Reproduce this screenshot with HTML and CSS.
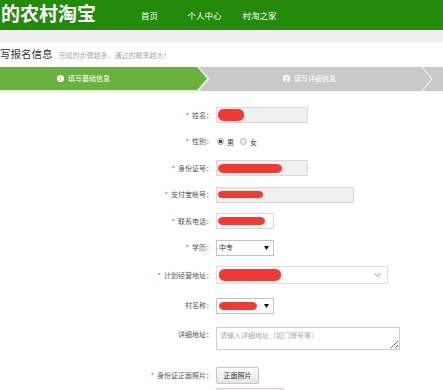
FILE: index.html
```html
<!DOCTYPE html>
<html lang="zh-CN">
<head>
<meta charset="utf-8">
<title>填写报名信息</title>
<link rel="stylesheet" href="styles.css">
</head>
<body>
<header class="topbar">
  <div class="logo">的农村淘宝</div>
  <nav class="nav">
    <a href="#">首页</a>
    <a href="#">个人中心</a>
    <a href="#">村淘之家</a>
  </nav>
</header>
<div class="strip"></div>
<main>
  <div class="page-title">
    <h1>写报名信息</h1>
    <span class="hint">完成的步骤越多，通过的概率越大！</span>
  </div>
  <div class="steps">
    <div class="step step-first">
      <span class="step-label"><span class="num num-active">1</span>填写基础信息</span>
    </div>
    <div class="step step-second">
      <span class="step-label"><span class="num">2</span>填写详细信息</span>
      <svg class="chev" width="12" height="24" viewBox="0 0 12 24"><path d="M1 0 L11 12 L1 24" fill="none" stroke="#fff" stroke-width="1"/></svg>
    </div>
  </div>

  <form class="form">
    <div class="row">
      <span class="label"><span class="req">*</span>姓名：</span>
      <div class="input w-md"><span class="redact r-name"></span></div>
    </div>
    <div class="row">
      <span class="label"><span class="req">*</span>性别：</span>
      <div class="radios">
        <span class="radio radio-on"></span><span class="opt">男</span>
        <span class="radio"></span><span class="opt">女</span>
      </div>
    </div>
    <div class="row">
      <span class="label"><span class="req">*</span>身份证号：</span>
      <div class="input w-md"><span class="redact r-id"></span></div>
    </div>
    <div class="row">
      <span class="label"><span class="req">*</span>支付宝帐号：</span>
      <div class="input w-lg"><span class="redact r-pay"></span></div>
    </div>
    <div class="row">
      <span class="label"><span class="req">*</span>联系电话：</span>
      <div class="input input-white w-sm"><span class="redact r-tel"></span></div>
    </div>
    <div class="row">
      <span class="label"><span class="req">*</span>学历：</span>
      <div class="select w-sm"><span class="val">中专</span><svg width="5" height="4" viewBox="0 0 5 4"><path d="M0 0 H5 L2.5 4 Z" fill="#111"/></svg></div>
    </div>
    <div class="row">
      <span class="label"><span class="req">*</span>计划经营地址：</span>
      <div class="select select-wide w-xl"><span class="redact r-addr"></span><svg width="7" height="4" viewBox="0 0 7 4"><path d="M0.5 0.5 L3.5 3.3 L6.5 0.5" fill="none" stroke="#888" stroke-width="0.9"/></svg></div>
    </div>
    <div class="row row-gap3">
      <span class="label">村名称：</span>
      <div class="select w-sm"><span class="redact r-village"></span><svg width="5" height="4" viewBox="0 0 5 4"><path d="M0 0 H5 L2.5 4 Z" fill="#111"/></svg></div>
    </div>
    <div class="row row-gap3">
      <span class="label label-top">详细地址：</span>
      <textarea class="textarea" placeholder="请输入详细地址（如门牌号等）"></textarea>
    </div>
    <div class="row row-gap6">
      <span class="label"><span class="req">*</span>身份证正面照片：</span>
      <div><button type="button" class="btn">正面照片</button></div>
    </div>
    <div class="row row-preview">
      <span></span>
      <div class="preview"></div>
    </div>
  </form>
</main>
</body>
</html>
```

FILE: styles.css
```css
* { box-sizing: border-box; }
html, body {
  margin: 0;
  padding: 0;
  overflow: hidden;
  background: #fff;
}
body {
  width: 443px;
  height: 390px;
  font-family: "Noto Sans CJK SC", "Noto Sans", sans-serif;
  color: #333;
}

/* header */
.topbar {
  height: 30px;
  background: #248a0b;
  display: flex;
  align-items: center;
}
.logo {
  flex: none;
  padding-left: 1px;
  font-size: 19px;
  font-weight: 700;
  line-height: 1.2;
  color: #fff;
  margin-top: -4px;
  white-space: nowrap;
}
.nav {
  display: flex;
  margin-left: 26px;
}
.nav a {
  width: 55px;
  text-align: center;
  color: #fff;
  font-size: 8.5px;
  text-decoration: none;
}
.strip {
  height: 12px;
  background: #efefef;
  border-top: 1px solid #f6faf4;
}

/* title */
.page-title {
  height: 25px;
  display: flex;
  align-items: center;
  gap: 6px;
}
.page-title h1 {
  margin: 0;
  font-size: 10.5px;
  font-weight: 400;
  color: #333;
  line-height: 1;
}
.hint {
  font-size: 7px;
  color: #aaa;
}

/* steps */
.steps {
  height: 24px;
  background: #c9c9c9;
  display: flex;
}
.step {
  display: flex;
  align-items: center;
  height: 100%;
}
.step-first {
  position: relative;
  width: 210px;
  background: #dcefd1;
  clip-path: polygon(0 0, 199px 0, 210px 50%, 199px 100%, 0 100%);
}
.step-first::before {
  content: "";
  position: absolute;
  left: 0;
  top: 0;
  bottom: 1px;
  width: 209px;
  background: #6ab23d;
  clip-path: polygon(0 0, 197px 0, 207px 50%, 197px 100%, 0 100%);
}
.step-label {
  position: relative;
  display: flex;
  align-items: center;
  gap: 4px;
  color: #fff;
  font-size: 7px;
  line-height: 1;
  margin-top: -1px;
}
.step-first .step-label { padding-left: 57px; }
.step-second {
  flex: 1;
  padding-left: 73px;
}
.chev { margin-left: auto; margin-right: 10px; }
.num {
  width: 7px;
  height: 7px;
  border-radius: 50%;
  background: #fff;
  color: #999;
  font-size: 5px;
  display: inline-flex;
  align-items: center;
  justify-content: center;
}
.num-active { color: #6ab23d; }

/* form */
.form {
  padding-top: 16px;
  display: flex;
  flex-direction: column;
  gap: 10.5px;
}
.row {
  display: grid;
  grid-template-columns: 213px 1fr;
  column-gap: 3px;
  align-items: center;
}
.row-gap3 { margin-top: 3px; }
.row-gap6 { margin-top: 6px; }
.row-preview { margin-top: -6px; }
.label {
  text-align: right;
  font-size: 7px;
  line-height: 1;
  color: #555;
  white-space: nowrap;
}
.label-top { align-self: start; padding-top: 4px; }
.req {
  color: #e0383b;
  margin-right: 3px;
}
.input, .select {
  height: 16px;
  border: 1px solid #d9d9d9;
  background: #f0f0f0;
  display: flex;
  align-items: center;
  padding-left: 1px;
}
.input-white { background: #fff; }
.select {
  background: #fff;
  border-color: #c4c4c4;
  justify-content: space-between;
  padding-right: 4px;
  padding-left: 2px;
}
.select-wide { height: 18px; border-color: #ddd; padding-right: 6px; }
.val { font-size: 7px; color: #333; line-height: 1; }
.w-sm { width: 58px; }
.w-md { width: 92px; }
.w-lg { width: 138px; }
.w-xl { width: 172px; }

.redact {
  display: block;
  background: #f23a32;
  border-radius: 6px / 5px;
}
.r-name { width: 26px; height: 12px; }
.r-id { width: 64px; height: 9px; }
.r-pay { width: 45px; height: 7px; }
.r-tel { width: 47px; height: 8px; }
.r-addr { width: 62px; height: 12px; }
.r-village { width: 38px; height: 8px; }

.radios {
  display: flex;
  align-items: center;
  height: 16px;
}
.radio {
  width: 7px;
  height: 7px;
  border-radius: 50%;
  border: 1px solid #b5b5b5;
  background: #e9e9e9;
  margin-left: 1px;
}
.radio-on {
  background: radial-gradient(circle, #444 0 1.6px, #f4f4f4 2px);
  border-color: #999;
}
.opt {
  font-size: 7px;
  line-height: 1;
  color: #333;
  margin: 2px 5px 0 3px;
}

.textarea {
  width: 184px;
  height: 23px;
  border: 1px solid #cfcfcf;
  padding: 3px 3px;
  font-family: "Noto Sans CJK SC", "Noto Sans", sans-serif;
  font-size: 7px;
  line-height: 1.2;
  color: #333;
  resize: both;
  display: block;
}
.textarea::placeholder { color: #aaa; }

.btn {
  width: 43px;
  height: 17px;
  padding: 0;
  border: 1px solid #c6c6c6;
  border-radius: 2px;
  background: linear-gradient(#fbfbfb, #e6e6e6);
  font-family: "Noto Sans CJK SC", "Noto Sans", sans-serif;
  font-size: 7px;
  color: #333;
  display: block;
}
.preview {
  width: 68px;
  height: 30px;
  border: 1px solid #f3c4c4;
  background: #fdf2f2;
}
```
